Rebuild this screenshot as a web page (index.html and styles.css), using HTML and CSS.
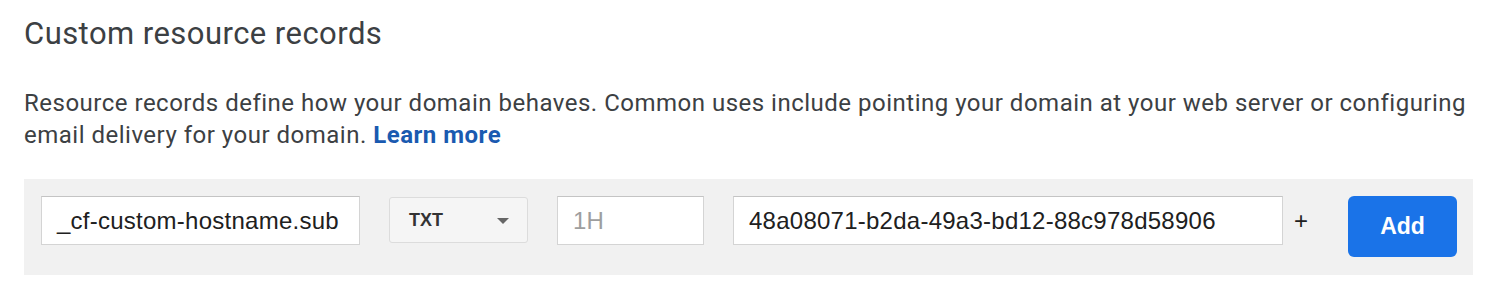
FILE: index.html
```html
<!DOCTYPE html>
<html>
<head>
<meta charset="utf-8">
<link rel="stylesheet" href="styles.css">
</head>
<body>
<div class="page">
  <h1 class="title">Custom resource records</h1>
  <p class="desc">Resource records define how your domain behaves. Common uses include pointing your domain at your web server or configuring email delivery for your domain. <a class="link" href="#">Learn more</a></p>
  <div class="bar">
    <div class="field name">_cf-custom-hostname.sub</div>
    <div class="select">
      <span class="select-label">TXT</span>
      <svg class="caret" width="12" height="6" viewBox="0 0 12 6"><path d="M0 0 L12 0 L6 6 Z" fill="#666"/></svg>
    </div>
    <div class="field ttl">1H</div>
    <div class="field data">48a08071-b2da-49a3-bd12-88c978d58906</div>
    <div class="plus">+</div>
    <button class="add">Add</button>
  </div>
</div>
</body>
</html>
```
FILE: styles.css
```css
html, body {
  margin: 0;
  padding: 0;
  background: #ffffff;
}
.page {
  padding: 0 24px;
}
.title {
  margin: 16px 0 0 0;
  font-family: Roboto, "Open Sans", sans-serif;
  font-weight: 400;
  font-size: 31px;
  line-height: 36px;
  color: #3c4043;
  letter-spacing: 0.45px;
}
.desc {
  margin: 35px 0 0 0;
  font-family: Roboto, sans-serif;
  font-size: 24px;
  line-height: 32px;
  letter-spacing: 0.5px;
  color: #3c4043;
  width: 1462px;
}
.link {
  color: #1a5ab0;
  font-weight: 700;
  text-decoration: none;
}
.bar {
  margin-top: 28px;
  width: 1449px;
  box-sizing: border-box;
  background: #f1f1f1;
  padding: 17px 0 18px 17px;
  display: flex;
  align-items: flex-start;
}
.field {
  box-sizing: border-box;
  height: 49px;
  background: #fff;
  border: 1px solid #d4d4d4;
  border-top-color: #c4c4c4;
  font-family: "Liberation Sans", Arial, sans-serif;
  font-size: 24px;
  letter-spacing: 0.25px;
  line-height: 47px;
  color: #202020;
  padding-left: 15px;
  white-space: nowrap;
  overflow: hidden;
}
.name { width: 319px; }
.ttl { width: 147px; margin-left: 29px; color: #9e9e9e; }
.data { width: 550px; margin-left: 29px; }
.select {
  box-sizing: border-box;
  width: 139px;
  height: 46px;
  margin-top: 1px;
  margin-left: 29px;
  background: #f5f5f5;
  border: 1px solid #dcdcdc;
  border-radius: 3px;
  display: flex;
  align-items: center;
  justify-content: space-between;
  padding: 0 18px 0 19px;
}
.select-label {
  font-family: "Liberation Sans", Arial, sans-serif;
  font-weight: 700;
  font-size: 18px;
  color: #333;
}
.caret {
  display: block;
  margin-top: 2px;
}
.plus {
  margin-left: 11px;
  height: 49px;
  line-height: 49px;
  font-family: "Liberation Sans", Arial, sans-serif;
  font-size: 24px;
  color: #202020;
}
.add {
  margin-left: 40px;
  width: 109px;
  height: 61px;
  border: none;
  border-radius: 6px;
  background: #1a73e8;
  color: #fff;
  font-family: "Liberation Sans", Arial, sans-serif;
  font-weight: 700;
  font-size: 23px;
  padding: 0;
}
```
